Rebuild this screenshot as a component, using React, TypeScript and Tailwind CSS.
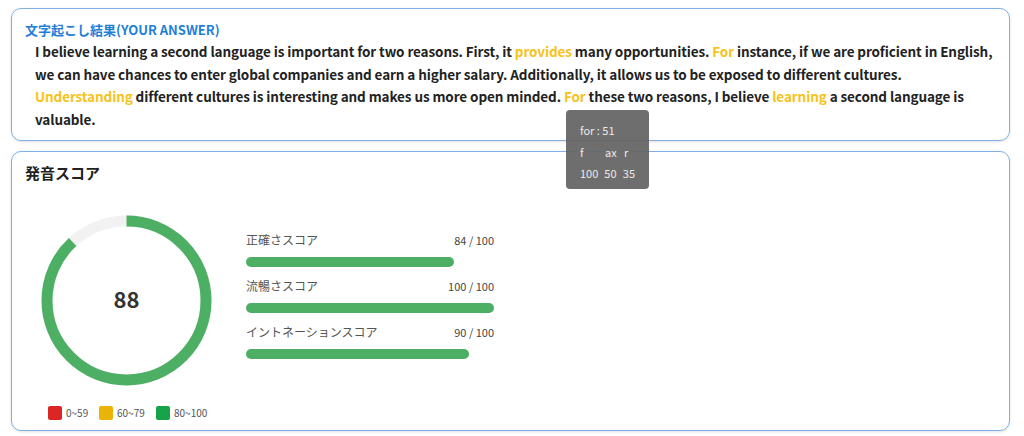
import React from 'react';

const font = { fontFamily: '"Noto Sans CJK JP", "Noto Sans", sans-serif' };

const scores = [
  { label: '正確さスコア', value: 84 },
  { label: '流暢さスコア', value: 100 },
  { label: 'イントネーションスコア', value: 90 },
];

function Hl({ children }: { children: React.ReactNode }) {
  return <span className="text-[#f7c21b]">{children}</span>;
}

function Donut({ value }: { value: number }) {
  const r = 79.5;
  const c = 2 * Math.PI * r;
  return (
    <div className="relative w-[171px] h-[171px]">
      <svg width="171" height="171" viewBox="0 0 171 171">
        <circle cx="85.5" cy="85.5" r={r} fill="none" stroke="#f2f2f2" strokeWidth="11" />
        <circle
          cx="85.5"
          cy="85.5"
          r={r}
          fill="none"
          stroke="#4caf64"
          strokeWidth="11"
          strokeDasharray={`${(c * value) / 100} ${c}`}
          transform="rotate(-90 85.5 85.5)"
        />
      </svg>
      <div className="absolute inset-0 flex items-center justify-center pb-[5px] text-[22px] font-bold text-[#333]">
        {value}
      </div>
    </div>
  );
}

export default function App() {
  return (
    <div className="relative w-[1024px] h-[436px] bg-white pt-[8px] pl-[11px]" style={font}>
      {/* Transcript card */}
      <div className="w-[999px] h-[133px] rounded-[10px] border border-[#7db0e6] shadow-[0_1px_3px_rgba(0,0,0,0.12)] pt-[12px] px-[13px]">
        <div className="text-[13px] leading-[18px] font-bold text-[#1f7fd8]">文字起こし結果(YOUR ANSWER)</div>
        <p className="mt-[1px] pl-[10px] text-[13.5px] leading-[22.5px] font-bold tracking-[-0.1px] text-[#222] whitespace-nowrap">
          I believe learning a second language is important for two reasons. First, it <Hl>provides</Hl> many
          opportunities. <Hl>For</Hl> instance, if we are proficient in English,
          <br />
          we can have chances to enter global companies and earn a higher salary. Additionally, it allows us to be
          exposed to different cultures.
          <br />
          <Hl>Understanding</Hl> different cultures is interesting and makes us more open minded. <Hl>For</Hl> these
          two reasons, I believe <Hl>learning</Hl> a second language is
          <br />
          valuable.
        </p>
      </div>

      {/* Score card */}
      <div className="mt-[10px] w-[999px] h-[280px] rounded-[10px] border border-[#7db0e6] shadow-[0_1px_3px_rgba(0,0,0,0.12)] pt-[11px] px-[13px]">
        <div className="text-[15px] leading-[20px] font-bold text-[#222]">発音スコア</div>
        <div className="flex">
          <div className="ml-[16px] mt-[32px] flex flex-col">
            <Donut value={88} />
            <div className="mt-[19px] ml-[7px] flex items-center text-[10px] text-[#555]">
              <span className="w-[14px] h-[14px] rounded-[2px] bg-[#dc2626]" />
              <span className="ml-[4px] w-[33px]">0~59</span>
              <span className="w-[14px] h-[14px] rounded-[2px] bg-[#eab308]" />
              <span className="ml-[4px] w-[39px]">60~79</span>
              <span className="w-[14px] h-[14px] rounded-[2px] bg-[#16a34a]" />
              <span className="ml-[4px]">80~100</span>
            </div>
          </div>
          <div className="ml-[34px] mt-[49px] w-[248px] flex flex-col gap-[11px]">
            {scores.map((s) => (
              <div key={s.label}>
                <div className="flex justify-between items-center h-[16px]">
                  <span className="text-[12px] text-[#555]">{s.label}</span>
                  <span className="text-[11px] text-[#444]">{s.value} / 100</span>
                </div>
                <div className="mt-[9px] h-[10px] w-full rounded-full">
                  <div className="h-full rounded-full bg-[#4caf64]" style={{ width: `${s.value}%` }} />
                </div>
              </div>
            ))}
          </div>
        </div>
      </div>

      {/* Tooltip */}
      <div className="absolute left-[566px] top-[110px] w-[83px] h-[79px] rounded-[4px] bg-[#666]/95 px-[14px] pt-[10px] text-[11px] leading-[21.5px] text-[#ececec]">
        <div>for : 51</div>
        <div className="flex">
          <span className="w-[25px]">f</span>
          <span className="w-[19px]">ax</span>
          <span>r</span>
        </div>
        <div className="flex">
          <span className="w-[25px]">100</span>
          <span className="w-[19px]">50</span>
          <span>35</span>
        </div>
      </div>
    </div>
  );
}
